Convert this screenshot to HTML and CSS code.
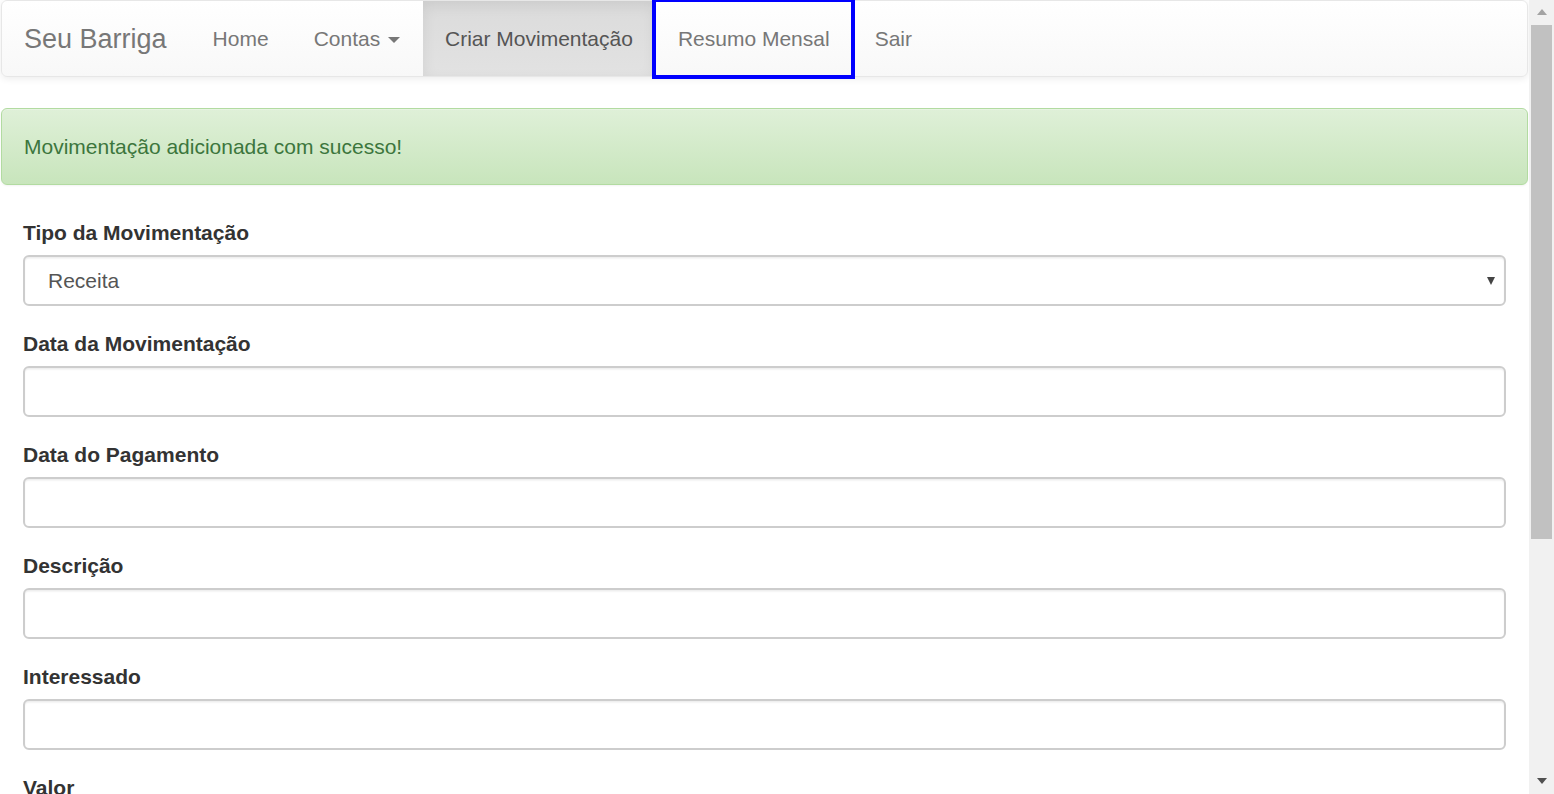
FILE: index.html
```html
<!DOCTYPE html>
<html lang="pt-BR">
<head>
<meta charset="utf-8">
<title>Seu Barriga</title>
<link rel="stylesheet" href="styles.css">
</head>
<body>
<div class="viewport">
  <div class="page">
    <nav class="navbar">
      <a class="brand" href="#">Seu Barriga</a>
      <ul class="nav">
        <li><a href="#">Home</a></li>
        <li><a href="#">Contas <span class="caret"></span></a></li>
        <li class="active"><a href="#">Criar Movimentação</a></li>
        <li class="focused"><a href="#">Resumo Mensal</a></li>
        <li><a href="#">Sair</a></li>
      </ul>
    </nav>
    <div class="alert">Movimentação adicionada com sucesso!</div>
    <form class="form">
      <div class="form-group">
        <label>Tipo da Movimentação</label>
        <div class="select">
          <span class="select-value">Receita</span>
          <span class="select-arrow"></span>
        </div>
      </div>
      <div class="form-group">
        <label>Data da Movimentação</label>
        <input class="input" type="text">
      </div>
      <div class="form-group">
        <label>Data do Pagamento</label>
        <input class="input" type="text">
      </div>
      <div class="form-group">
        <label>Descrição</label>
        <input class="input" type="text">
      </div>
      <div class="form-group">
        <label>Interessado</label>
        <input class="input" type="text">
      </div>
      <div class="form-group">
        <label>Valor</label>
        <input class="input" type="text">
      </div>
    </form>
  </div>
  <div class="scrollbar">
    <div class="sb-btn"><span class="sb-up"></span></div>
    <div class="sb-thumb"></div>
    <div class="sb-fill"></div>
    <div class="sb-btn"><span class="sb-down"></span></div>
  </div>
</div>
</body>
</html>
```
FILE: styles.css
```css
* { box-sizing: border-box; }
html, body { margin: 0; padding: 0; }
body {
  font-family: "Liberation Sans", Arial, sans-serif;
  font-size: 21px;
  line-height: 30px;
  color: #333;
  background: #fff;
}
.viewport {
  display: flex;
  height: 794px;
  overflow: hidden;
}
.page {
  flex: 1;
  min-width: 0;
  overflow: hidden;
}
.navbar {
  display: flex;
  align-items: stretch;
  height: 77px;
  margin: 0 1px 31px 1px;
  border: 1px solid #e7e7e7;
  border-radius: 6px;
  background: linear-gradient(to bottom, #ffffff 0%, #f8f8f8 100%);
  box-shadow: inset 0 1px 0 rgba(255,255,255,.15), 0 1.5px 7.5px rgba(0,0,0,.075);
}
.brand {
  display: block;
  padding: 22.5px 23.5px 22.5px 22px;
  font-size: 27px;
  line-height: 30px;
  color: #777;
  text-decoration: none;
}
.nav {
  display: flex;
  list-style: none;
  margin: 0;
  padding: 0;
}
.nav li { display: flex; }
.nav a {
  display: block;
  padding: 22.5px;
  line-height: 30px;
  color: #777;
  text-decoration: none;
}
.nav .active a {
  color: #555;
  background: linear-gradient(to bottom, #dbdbdb 0%, #e2e2e2 100%);
  box-shadow: inset 0 4.5px 13.5px rgba(0,0,0,.075);
}
.nav .focused a {
  outline: 4px solid #0000ff;
  outline-offset: -1px;
  position: relative;
  z-index: 1;
}
.caret {
  display: inline-block;
  width: 0;
  height: 0;
  margin-left: 2px;
  vertical-align: middle;
  border-top: 6px solid #777;
  border-left: 6px solid transparent;
  border-right: 6px solid transparent;
}
.alert {
  margin: 0 1px 33px 1px;
  padding: 22.5px 22px;
  border: 1px solid #b2dba1;
  border-radius: 6px;
  color: #3c763d;
  background: linear-gradient(to bottom, #dff0d8 0%, #c8e5bc 100%);
  box-shadow: inset 0 1px 0 rgba(255,255,255,.25), 0 1px 2px rgba(0,0,0,.05);
}
.form {
  padding: 0 23px;
}
.form-group {
  margin-bottom: 23.5px;
}
.form-group label {
  display: block;
  font-weight: bold;
  margin-bottom: 6.5px;
  line-height: 30px;
}
.input, .select {
  display: block;
  width: 100%;
  height: 51px;
  margin: 0;
  padding: 9px 18px;
  font-family: inherit;
  font-size: 21px;
  color: #555;
  background: #fff;
  border: 2px solid #cdcdcd;
  border-radius: 6px;
  box-shadow: inset 0 1.5px 1.5px rgba(0,0,0,.075);
}
.select {
  display: flex;
  align-items: center;
  justify-content: space-between;
  padding: 1px 9px 0 23px;
}
.select-value {
  line-height: 30px;
}
.select-arrow {
  width: 0;
  height: 0;
  border-top: 8px solid #444;
  border-left: 4.5px solid transparent;
  border-right: 4.5px solid transparent;
}
.scrollbar {
  width: 25px;
  flex: none;
  display: flex;
  flex-direction: column;
  background: #f1f1f1;
}
.sb-btn {
  height: 25px;
  display: flex;
  align-items: center;
  justify-content: center;
  padding-left: 1px;
}
.sb-up {
  width: 0; height: 0;
  border-bottom: 6px solid #a3a3a3;
  border-left: 5px solid transparent;
  border-right: 5px solid transparent;
  margin-bottom: 2px;
}
.sb-down {
  width: 0; height: 0;
  border-top: 6px solid #505050;
  border-left: 5px solid transparent;
  border-right: 5px solid transparent;
  margin-top: -1px;
}
.sb-thumb {
  height: 514px;
  margin: 0 2px;
  background: #c1c1c1;
}
.sb-fill { flex: 1; }
```
